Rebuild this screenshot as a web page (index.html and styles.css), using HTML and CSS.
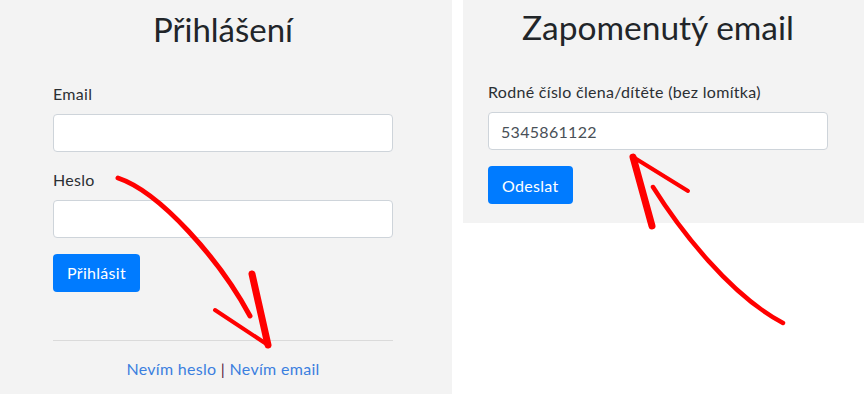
FILE: index.html
```html
<!doctype html>
<html lang="cs">
  <head>
    <meta charset="UTF-8" />
    <meta name="viewport" content="width=device-width, initial-scale=1.0" />
    <title>Přihlášení</title>
    <link rel="stylesheet" href="styles.css">
  </head>
  <body>
    <div class="panel login">
      <h1 class="panel-title">Přihlášení</h1>
      <form>
        <div class="form-group">
          <label for="email">Email</label>
          <input id="email" type="text" class="form-control">
        </div>
        <div class="form-group">
          <label for="heslo">Heslo</label>
          <input id="heslo" type="password" class="form-control">
        </div>
        <button type="button" class="btn">Přihlásit</button>
      </form>
      <hr>
      <p class="links">
        <a href="#">Nevím heslo</a> <span class="sep">|</span> <a href="#">Nevím email</a>
      </p>
    </div>

    <div class="panel forgot">
      <h1 class="panel-title">Zapomenutý email</h1>
      <form>
        <div class="form-group">
          <label for="rc">Rodné číslo člena/dítěte (bez lomítka)</label>
          <input id="rc" type="text" class="form-control" value="5345861122">
        </div>
        <button type="button" class="btn">Odeslat</button>
      </form>
    </div>

    <svg class="arrows" width="864" height="394" viewBox="0 0 864 394">
      <g fill="none" stroke="#ff0000" stroke-linecap="round" stroke-linejoin="round">
        <path d="M118 178 C 160 192, 220 260, 250 316" stroke-width="5" />
        <path d="M252 274 L 268 345" stroke-width="7" />
        <path d="M215 310 L 268 345" stroke-width="4" />
        <path d="M633 157 L 652 226" stroke-width="7" />
        <path d="M633 157 L 688 191" stroke-width="4" />
        <path d="M653 187 C 680 230, 730 295, 783 323" stroke-width="4.5" />
      </g>
    </svg>
  </body>
</html>
```

FILE: styles.css
```css
body {
  font-family: Lato, "Noto Sans", sans-serif;
  margin: 0;
  padding: 0;
  width: 864px;
  height: 394px;
  overflow: hidden;
  background: #fff;
  color: #212529;
  display: flex;
  align-items: flex-start;
  gap: 11px;
  position: relative;
}

.panel {
  background-color: #f3f3f3;
  box-sizing: border-box;
}

.login {
  width: 452px;
  height: 394px;
  padding: 0 59px 0 53px;
}

.forgot {
  flex: 1;
  padding: 0 36px 19px 25px;
}

.panel-title {
  font-weight: 400;
  font-size: 33px;
  line-height: 1.2;
  text-align: center;
  margin: 0;
}

.login .panel-title {
  padding-top: 10px;
  margin-bottom: 32px;
}

.forgot .panel-title {
  font-size: 33.5px;
  padding-top: 7px;
  margin-bottom: 33px;
}

.form-group {
  margin-bottom: 16px;
}

label {
  display: block;
  font-size: 16px;
  line-height: 24px;
  margin-bottom: 8px;
  color: #2b2f33;
  letter-spacing: 0.3px;
}

.form-control {
  display: block;
  width: 100%;
  box-sizing: border-box;
  height: 38px;
  padding: 6px 12px;
  font-family: inherit;
  font-size: 16px;
  letter-spacing: 0.3px;
  color: #495057;
  background: #fff;
  border: 1px solid #ced4da;
  border-radius: 4px;
}

.btn {
  display: inline-block;
  height: 38px;
  padding: 6px 14px;
  font-family: inherit;
  font-size: 16px;
  letter-spacing: 0.3px;
  color: #fff;
  background-color: #007bff;
  border: none;
  border-radius: 4px;
  cursor: pointer;
}

hr {
  border: 0;
  border-top: 1px solid #dadada;
  margin: 48px 0 0;
}

.links {
  text-align: center;
  font-size: 16px;
  letter-spacing: 0.3px;
  margin: 16px 0 0;
  line-height: 24px;
}

.links a {
  color: #3b7fdf;
  text-decoration: none;
}

.links .sep {
  color: #5a2040;
}

.arrows {
  position: absolute;
  left: 0;
  top: 0;
  pointer-events: none;
}
```
